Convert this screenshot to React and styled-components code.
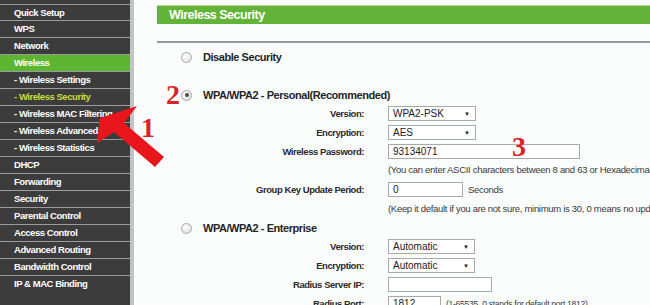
import React from 'react'
import styled, { createGlobalStyle } from 'styled-components'

const GlobalStyle = createGlobalStyle`
    html, body {
        margin: 0;
        padding: 0;
        background: #fbfcfc;
    }
    body {
        font-family: "Liberation Sans", Arial, sans-serif;
    }
`

const menu = [
    { label: 'Quick Setup' },
    { label: 'WPS' },
    { label: 'Network' },
    { label: 'Wireless', active: true },
    { label: '- Wireless Settings' },
    { label: '- Wireless Security', current: true },
    { label: '- Wireless MAC Filtering' },
    { label: '- Wireless Advanced' },
    { label: '- Wireless Statistics' },
    { label: 'DHCP' },
    { label: 'Forwarding' },
    { label: 'Security' },
    { label: 'Parental Control' },
    { label: 'Access Control' },
    { label: 'Advanced Routing' },
    { label: 'Bandwidth Control' },
    { label: 'IP & MAC Binding' },
]

function Select({ value, width }) {
    return (
        <SelectBox $width={width}>
            <span>{value}</span>
            <Caret>▼</Caret>
        </SelectBox>
    )
}

function App() {
    return (
        <>
            <GlobalStyle />
            <Page>
                <Sidebar>
                    {menu.map((item) => (
                        <MenuItem key={item.label} $active={item.active} $current={item.current}>
                            {item.label}
                        </MenuItem>
                    ))}
                </Sidebar>
                <Main>
                    <Header>Wireless Security</Header>
                    <Rule />
                    <Choice $top={5}>
                        <Radio />
                        <ChoiceLabel>Disable Security</ChoiceLabel>
                    </Choice>

                    <Choice $top={20}>
                        <Radio $checked />
                        <ChoiceLabel>WPA/WPA2 - Personal(Recommended)</ChoiceLabel>
                    </Choice>
                    <Form>
                        <Label>Version:</Label>
                        <Field><Select value='WPA2-PSK' width={88} /></Field>
                        <Label>Encryption:</Label>
                        <Field><Select value='AES' width={88} /></Field>
                        <Label>Wireless Password:</Label>
                        <Field><TextInput $width={192} defaultValue='93134071' /></Field>
                        <Note $height={16.5}>(You can enter ASCII characters between 8 and 63 or Hexadecimal characters between 8 and 64.)</Note>
                        <Label>Group Key Update Period:</Label>
                        <Field>
                            <TextInput $width={75} defaultValue='0' />
                            <Hint>Seconds</Hint>
                        </Field>
                        <Note $height={21}>(Keep it default if you are not sure, minimum is 30, 0 means no update)</Note>
                    </Form>

                    <Choice $top={1}>
                        <Radio />
                        <ChoiceLabel>WPA/WPA2 - Enterprise</ChoiceLabel>
                    </Choice>
                    <Form>
                        <Label>Version:</Label>
                        <Field><Select value='Automatic' width={87} /></Field>
                        <Label>Encryption:</Label>
                        <Field><Select value='Automatic' width={87} /></Field>
                        <Label>Radius Server IP:</Label>
                        <Field><TextInput $width={104} defaultValue='' /></Field>
                        <Label>Radius Port:</Label>
                        <Field>
                            <TextInput $width={53} defaultValue='1812' />
                            <Hint $small>(1-65535, 0 stands for default port 1812)</Hint>
                        </Field>
                    </Form>
                </Main>

                <Arrow viewBox='0 0 650 305'>
                    <polygon
                        points='100,118 137,106 124,123 164,157 155,167 114,132 97,143'
                        fill='#e8161c'
                    />
                </Arrow>
                <Step $x={141} $y={113.5}>1</Step>
                <Step $x={166} $y={80.5}>2</Step>
                <Step $x={512} $y={132.5}>3</Step>
            </Page>
        </>
    )
}

const Page = styled.div`
    position: relative;
    display: flex;
    width: 650px;
    height: 305px;
    overflow: hidden;
    background: #fbfcfc;
`
const Sidebar = styled.nav`
    width: 130px;
    flex-shrink: 0;
    padding-top: 3.5px;
    background: #3c3c3c;
    border-right: 4px solid #c2c4c4;
    box-sizing: content-box;
`
const MenuItem = styled.div`
    height: 15.95px;
    line-height: 15.95px;
    border-top: 1.5px solid #9c9c9c;
    padding-left: 14px;
    background: ${(p) => (p.$active ? '#5db532' : '#3c3c3c')};
    color: ${(p) => (p.$current ? '#c9dc3f' : '#ffffff')};
    font-size: 9.5px;
    font-weight: bold;
    letter-spacing: -0.45px;
    white-space: nowrap;
    overflow: hidden;
`
const Main = styled.main`
    flex: 1;
    min-width: 0;
    padding: 5px 0 0 23px;
    color: #2b2b2b;
`
const Header = styled.div`
    height: 18px;
    line-height: 18px;
    border-top: 1px solid #b9df92;
    background: #62b337;
    color: #ffffff;
    padding-left: 12px;
    font-size: 12.5px;
    font-weight: bold;
    letter-spacing: -0.5px;
    white-space: nowrap;
`
const Rule = styled.div`
    margin-top: 17px;
    height: 2px;
    background: #8f9d9d;
`
const Choice = styled.div`
    display: flex;
    align-items: center;
    gap: 11px;
    height: 18px;
    margin-top: ${(p) => p.$top}px;
    padding-left: 24px;
`
const Radio = styled.span`
    position: relative;
    width: 9px;
    height: 9px;
    border-radius: 50%;
    border: 1px solid #a8a8a8;
    background: radial-gradient(circle at 40% 35%, #ffffff, #d9d9d9);
    flex-shrink: 0;
    &::after {
        content: '';
        display: ${(p) => (p.$checked ? 'block' : 'none')};
        position: absolute;
        left: 2.5px;
        top: 2.5px;
        width: 4px;
        height: 4px;
        border-radius: 50%;
        background: #4a4a4a;
    }
`
const ChoiceLabel = styled.span`
    font-size: 11px;
    font-weight: bold;
    letter-spacing: -0.45px;
    color: #262626;
    white-space: nowrap;
`
const Form = styled.div`
    display: grid;
    grid-template-columns: 207px 1fr;
    grid-auto-rows: 19px;
    column-gap: 24px;
    align-items: center;
`
const Label = styled.div`
    text-align: right;
    font-size: 9.5px;
    font-weight: bold;
    letter-spacing: -0.45px;
    color: #2b2b2b;
    white-space: nowrap;
`
const Field = styled.div`
    display: flex;
    align-items: center;
    gap: 5px;
    white-space: nowrap;
`
const SelectBox = styled.div`
    box-sizing: border-box;
    display: flex;
    align-items: center;
    justify-content: space-between;
    width: ${(p) => p.$width}px;
    height: 15px;
    padding: 0 5px 0 4px;
    border: 1px solid #a9a9a9;
    background: #ffffff;
    font-size: 10px;
    color: #222;
`
const Caret = styled.span`
    font-size: 6px;
    color: #222;
`
const TextInput = styled.input`
    box-sizing: border-box;
    width: ${(p) => p.$width}px;
    height: 15px;
    padding: 0 4px;
    border: 1px solid #a9a9a9;
    background: #ffffff;
    font-family: "Liberation Sans", Arial, sans-serif;
    font-size: 10px;
    color: #222;
    outline: none;
`
const Hint = styled.span`
    font-size: ${(p) => (p.$small ? '8.6px' : '9.5px')};
    letter-spacing: -0.3px;
    color: #3a3a3a;
`
const Note = styled.div`
    grid-column: 2;
    align-self: center;
    height: ${(p) => p.$height}px;
    line-height: ${(p) => p.$height}px;
    font-size: 9.5px;
    letter-spacing: -0.3px;
    color: #3a3a3a;
    white-space: nowrap;
`
const Arrow = styled.svg`
    position: absolute;
    left: 0;
    top: 0;
    width: 650px;
    height: 305px;
    pointer-events: none;
`
const Step = styled.span`
    position: absolute;
    left: ${(p) => p.$x}px;
    top: ${(p) => p.$y}px;
    font-family: "Liberation Serif", "Times New Roman", serif;
    font-size: 28px;
    font-weight: bold;
    line-height: 1;
    color: #d5232a;
`

export default App
